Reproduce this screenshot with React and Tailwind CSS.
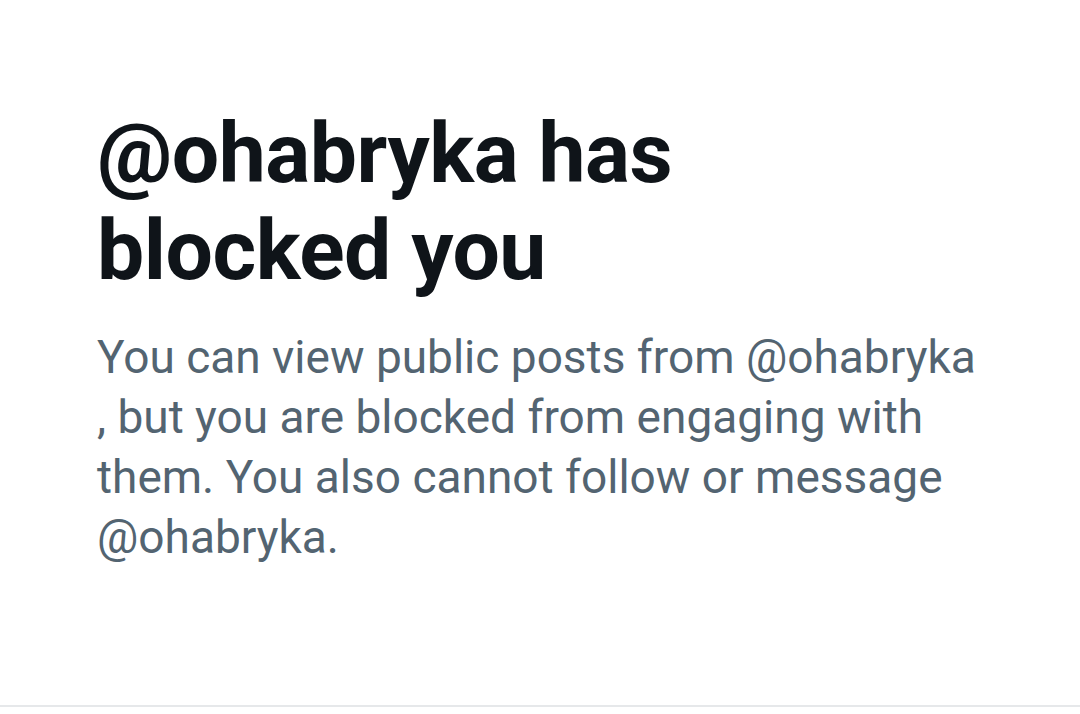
export default function App() {
  return (
    <div className="w-[1080px] h-[714px] bg-white flex flex-col" style={{ fontFamily: "Roboto, 'Noto Sans', sans-serif" }}>
      <div className="flex-1 pl-[97px] pr-[60px] pt-[105px]">
        <h1 className="text-[84px] leading-[97px] font-bold text-[#0f1419] tracking-[-0.5px]">
          @ohabryka has
          <br />
          blocked you
        </h1>
        <p className="mt-[28px] text-[46px] leading-[60px] text-[#536471]">
          You can view public posts from @ohabryka
          <br />
          , but you are blocked from engaging with
          <br />
          them. You also cannot follow or message
          <br />
          @ohabryka.
        </p>
      </div>
      <div className="h-[2px] bg-[#e6e8ea]" />
      <div className="h-[7px]" />
    </div>
  );
}
